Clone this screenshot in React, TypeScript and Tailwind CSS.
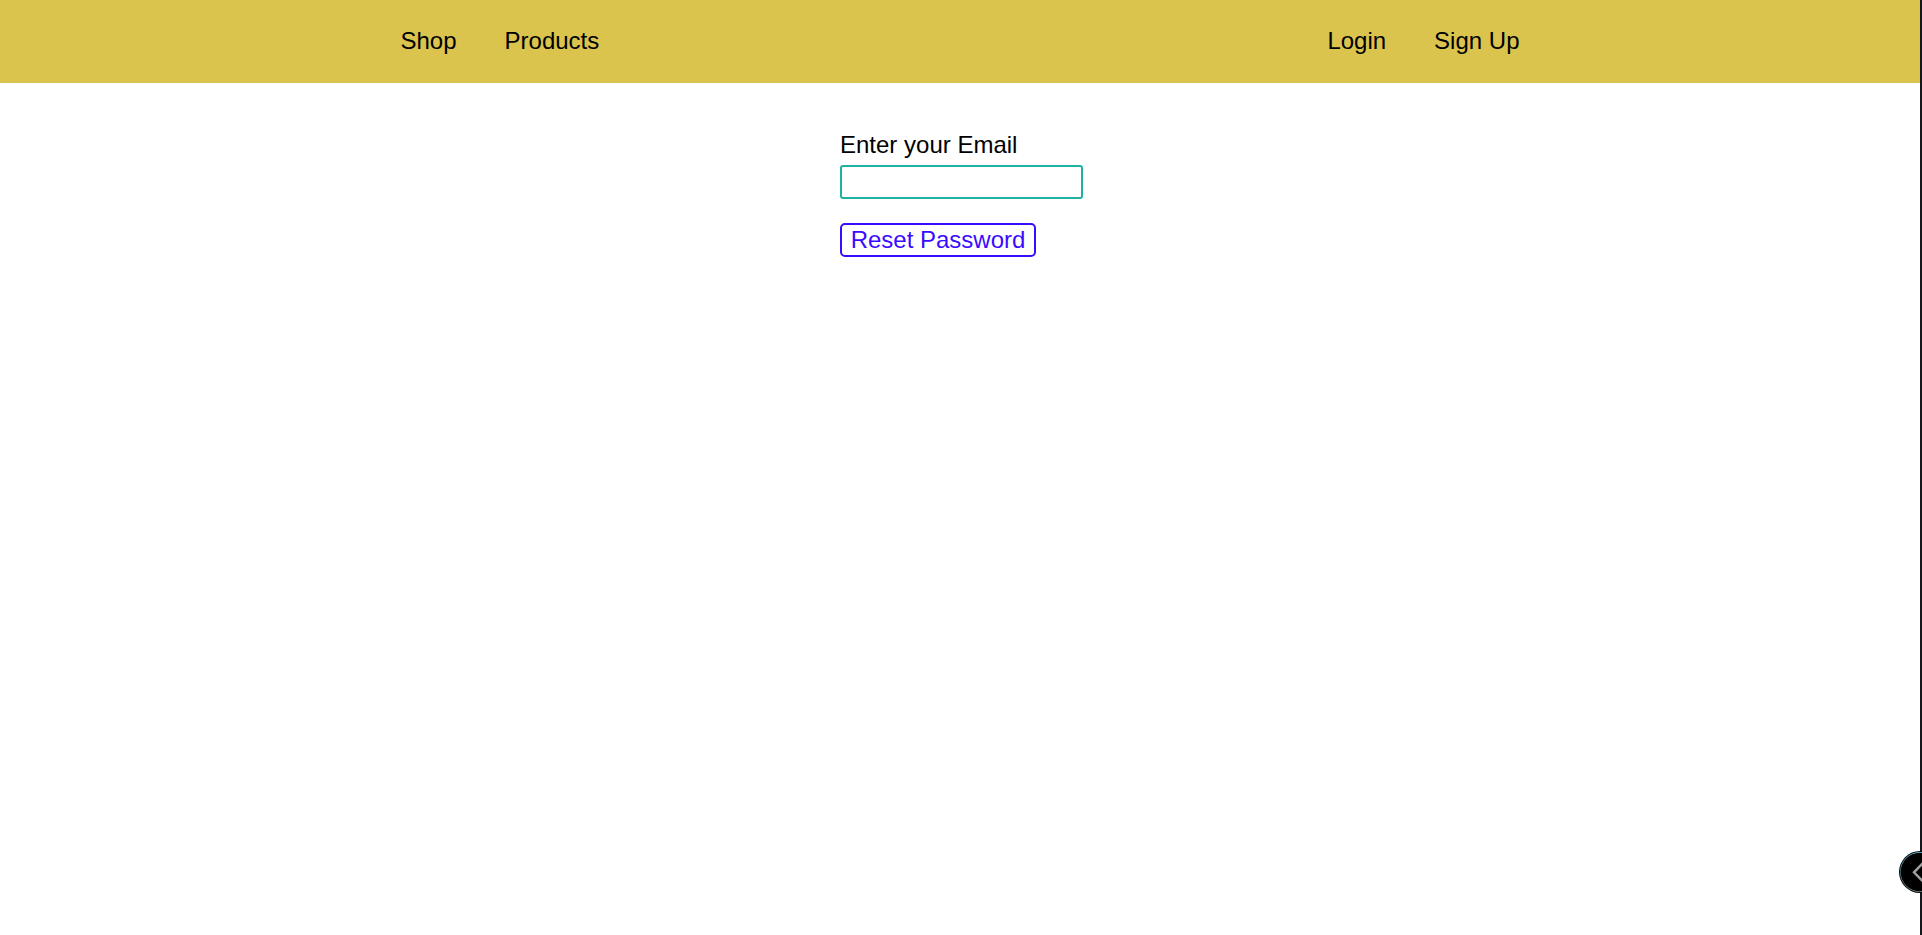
const links = {
  left: ["Shop", "Products"],
  right: ["Login", "Sign Up"],
};

function NavGroup({ items }: { items: string[] }) {
  return (
    <div className="flex gap-12">
      {items.map((item) => (
        <a key={item} href="#" className="whitespace-nowrap">
          {item}
        </a>
      ))}
    </div>
  );
}

export default function App() {
  return (
    <div className="flex h-[935px] overflow-hidden bg-white font-['Liberation_Sans',Arial,sans-serif] text-2xl leading-[27px] text-black">
      <div className="flex flex-1 flex-col">
        <header className="h-[83px] bg-[#dac44d] pt-[27px]">
          <nav className="mx-auto flex w-[1119px] justify-between">
            <NavGroup items={links.left} />
            <NavGroup items={links.right} />
          </nav>
        </header>
        <form className="mx-auto flex w-[240px] flex-col items-start pt-12">
          <label htmlFor="email" className="whitespace-nowrap">
            Enter your Email
          </label>
          <input
            id="email"
            type="email"
            className="mt-[7px] h-[34px] w-[243px] rounded-[3px] border-2 border-[#20b2a0] bg-white px-2 outline-none"
          />
          <button
            type="button"
            className="mt-6 flex h-[34px] w-[196px] items-start justify-center whitespace-nowrap rounded-[5px] border-2 border-[#3a0cff] pt-px text-[#3a0cff]"
          >
            Reset Password
          </button>
        </form>
      </div>
      <div className="relative w-0.5 bg-[#15181a]">
        <div className="absolute -left-[21px] top-[851px] h-[42px] w-[42px]">
          <svg viewBox="0 0 42 42" width="42" height="42" fill="none">
            <defs>
              <linearGradient id="rim" x1="0" y1="0" x2="0" y2="1">
                <stop offset="0" stopColor="#5fa3bf" />
                <stop offset="0.5" stopColor="#38606f" />
                <stop offset="1" stopColor="#6a7a80" />
              </linearGradient>
            </defs>
            <circle cx="21" cy="21" r="21" fill="#000" />
            <circle cx="21" cy="21" r="19.7" stroke="url(#rim)" strokeWidth="1" />
            <path d="M24 12 L15 21.3 L24 30.5" stroke="#a0a0a0" strokeWidth="2.4" />
          </svg>
        </div>
      </div>
    </div>
  );
}
